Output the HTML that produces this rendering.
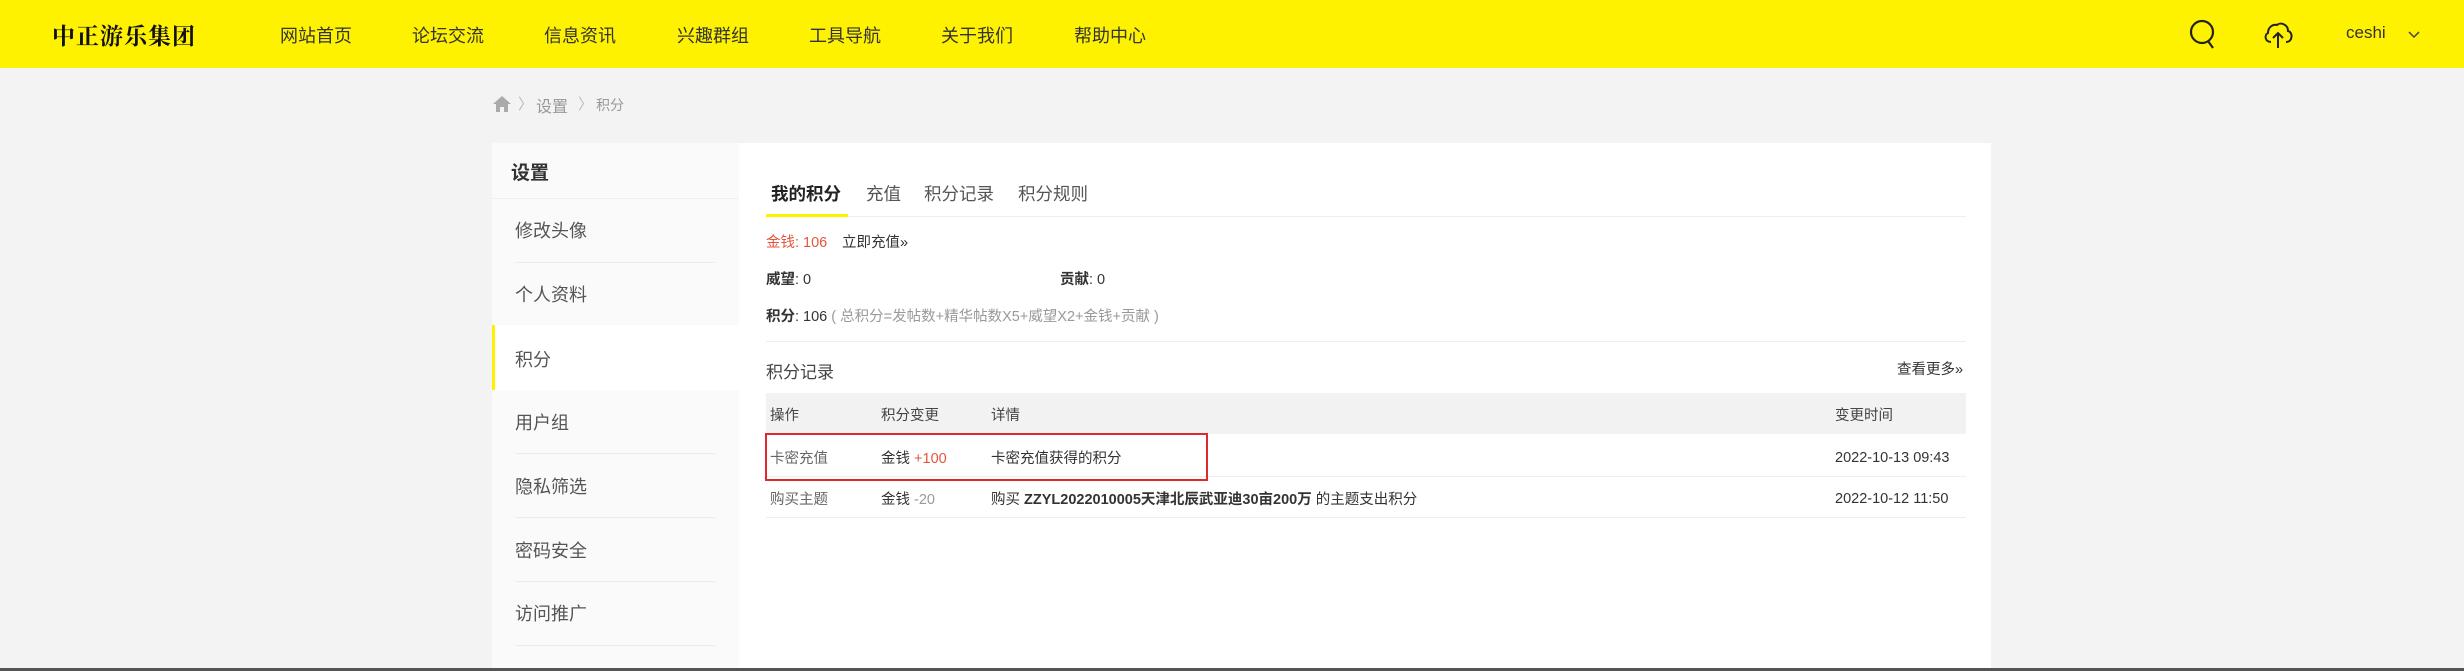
<!DOCTYPE html>
<html><head><meta charset="utf-8"><style>
*{margin:0;padding:0;box-sizing:border-box}
body{width:2464px;height:671px;overflow:hidden;background:#f3f3f3;font-family:"Liberation Sans","Noto Sans CJK SC",sans-serif;color:#333;position:relative}
.a{position:absolute;white-space:nowrap}
#hd{position:absolute;left:0;top:0;width:2464px;height:68px;background:#fff200}
.nav{font-size:18px;color:#333;top:22px}
.side{position:absolute;left:492px;top:143px;width:247px;height:525px;background:#fafafa}
.mi{position:absolute;left:23px;font-size:18px;color:#555}
.sep{position:absolute;left:23px;width:200px;height:1px;background:#ececec}
.main{position:absolute;left:739px;top:143px;width:1252px;height:525px;background:#fff}
.t15{font-size:14.5px}
</style></head><body>
<div id="hd"></div>
<div class="a" style="left:52px;top:18px;font-size:23px;font-weight:bold;font-family:'Noto Serif CJK SC',serif;color:#111;letter-spacing:1px">中正游乐集团</div>
<div class="a nav" style="left:280px">网站首页</div>
<div class="a nav" style="left:412px">论坛交流</div>
<div class="a nav" style="left:544px">信息资讯</div>
<div class="a nav" style="left:677px">兴趣群组</div>
<div class="a nav" style="left:809px">工具导航</div>
<div class="a nav" style="left:941px">关于我们</div>
<div class="a nav" style="left:1074px">帮助中心</div>
<svg class="a" style="left:2188px;top:19px" width="30" height="32" viewBox="0 0 30 32"><circle cx="14" cy="13" r="11" fill="none" stroke="#222" stroke-width="2.2"/><path d="M20 22 L25 29" stroke="#222" stroke-width="2.2"/></svg>
<svg class="a" style="left:2262px;top:20px" width="32" height="30" viewBox="0 0 32 30"><path d="M9 22 C3 22 2 15 6 13 C6 7 11 4 15 5 C18 2 26 4 26 11 C31 12 31 22 24 22" fill="none" stroke="#222" stroke-width="2"/><path d="M16 28 V13 M11 18 L16 13 L21 18" fill="none" stroke="#222" stroke-width="2"/></svg>
<div class="a" style="left:2346px;top:23px;font-size:17px;color:#333">ceshi</div>
<svg class="a" style="left:2408px;top:31px" width="12" height="8" viewBox="0 0 12 8"><path d="M1 1 L6 6 L11 1" fill="none" stroke="#444" stroke-width="1.5"/></svg>

<svg class="a" style="left:492px;top:95px" width="20" height="18" viewBox="0 0 20 18"><path d="M10 1 L19 9 H16 V17 H12 V12 H8 V17 H4 V9 H1 Z" fill="#aaa"/></svg>
<div class="a" style="left:518px;top:93px;font-size:15px;color:#bbb">〉</div>
<div class="a" style="left:536px;top:93px;font-size:16px;color:#999">设置</div>
<div class="a" style="left:578px;top:93px;font-size:15px;color:#bbb">〉</div>
<div class="a" style="left:596px;top:95px;font-size:14px;color:#999">积分</div>

<div class="side">
 <div class="a" style="left:19px;top:15px;font-size:19px;font-weight:bold;color:#333">设置</div>
 <div style="position:absolute;left:0;top:55px;width:247px;height:1px;background:#f0f0f0"></div>
 <div class="mi" style="top:74px">修改头像</div><div class="sep" style="top:119px"></div>
 <div class="mi" style="top:138px">个人资料</div>
 <div style="position:absolute;left:0;top:182px;width:247px;height:65px;background:#fff;border-left:3px solid #fff200"></div>
 <div class="mi" style="top:203px">积分</div>
 <div class="mi" style="top:266px">用户组</div><div class="sep" style="top:310px"></div>
 <div class="mi" style="top:330px">隐私筛选</div><div class="sep" style="top:374px"></div>
 <div class="mi" style="top:394px">密码安全</div><div class="sep" style="top:438px"></div>
 <div class="mi" style="top:457px">访问推广</div><div class="sep" style="top:502px"></div>
</div>

<div class="main">
 <div class="a" style="left:32px;top:38px;font-size:17.5px;font-weight:bold;color:#222">我的积分</div>
 <div class="a" style="left:127px;top:38px;font-size:17.5px;color:#555">充值</div>
 <div class="a" style="left:185px;top:38px;font-size:17.5px;color:#555">积分记录</div>
 <div class="a" style="left:279px;top:38px;font-size:17.5px;color:#555">积分规则</div>
 <div style="position:absolute;left:27px;top:73px;width:1200px;height:1px;background:#eee"></div>
 <div style="position:absolute;left:27px;top:71px;width:82px;height:3px;background:#fff200"></div>
 <div class="a t15" style="left:27px;top:88px;color:#e5553a">金钱: 106</div>
 <div class="a t15" style="left:103px;top:88px;color:#333">立即充值»</div>
 <div class="a t15" style="left:27px;top:125px"><b>威望</b>: 0</div>
 <div class="a t15" style="left:321px;top:125px"><b>贡献</b>: 0</div>
 <div class="a t15" style="left:27px;top:162px"><b>积分</b>: 106 <span style="color:#999">( 总积分=发帖数+精华帖数X5+威望X2+金钱+贡献 )</span></div>
 <div style="position:absolute;left:27px;top:198px;width:1200px;height:1px;background:#eee"></div>
 <div class="a" style="left:27px;top:215px;font-size:17px;color:#444">积分记录</div>
 <div class="a t15" style="left:1158px;top:215px;color:#333">查看更多»</div>
 <div style="position:absolute;left:27px;top:250px;width:1200px;height:41px;background:#f2f2f2"></div>
 <div class="a t15" style="left:31px;top:261px;color:#444">操作</div>
 <div class="a t15" style="left:142px;top:261px;color:#444">积分变更</div>
 <div class="a t15" style="left:252px;top:261px;color:#444">详情</div>
 <div class="a t15" style="left:1096px;top:261px;color:#444">变更时间</div>
 <div style="position:absolute;left:27px;top:333px;width:1200px;height:1px;background:#eee"></div>
 <div style="position:absolute;left:27px;top:374px;width:1200px;height:1px;background:#eee"></div>
 <div class="a t15" style="left:31px;top:304px;color:#666">卡密充值</div>
 <div class="a t15" style="left:142px;top:304px;color:#333">金钱 <span style="color:#e5553a">+100</span></div>
 <div class="a t15" style="left:252px;top:304px;color:#333">卡密充值获得的积分</div>
 <div class="a t15" style="left:1096px;top:307px;color:#333">2022-10-13 09:43</div>
 <div class="a t15" style="left:31px;top:345px;color:#666">购买主题</div>
 <div class="a t15" style="left:142px;top:345px;color:#333">金钱 <span style="color:#999">-20</span></div>
 <div class="a t15" style="left:252px;top:345px;color:#333">购买 <b>ZZYL2022010005天津北辰武亚迪30亩200万</b> 的主题支出积分</div>
 <div class="a t15" style="left:1096px;top:348px;color:#333">2022-10-12 11:50</div>
 <div style="position:absolute;left:26px;top:290px;width:443px;height:48px;border:2px solid #e0282e"></div>
</div>
<div style="position:absolute;left:0;top:668px;width:2464px;height:3px;background:#555"></div>
</body></html>
